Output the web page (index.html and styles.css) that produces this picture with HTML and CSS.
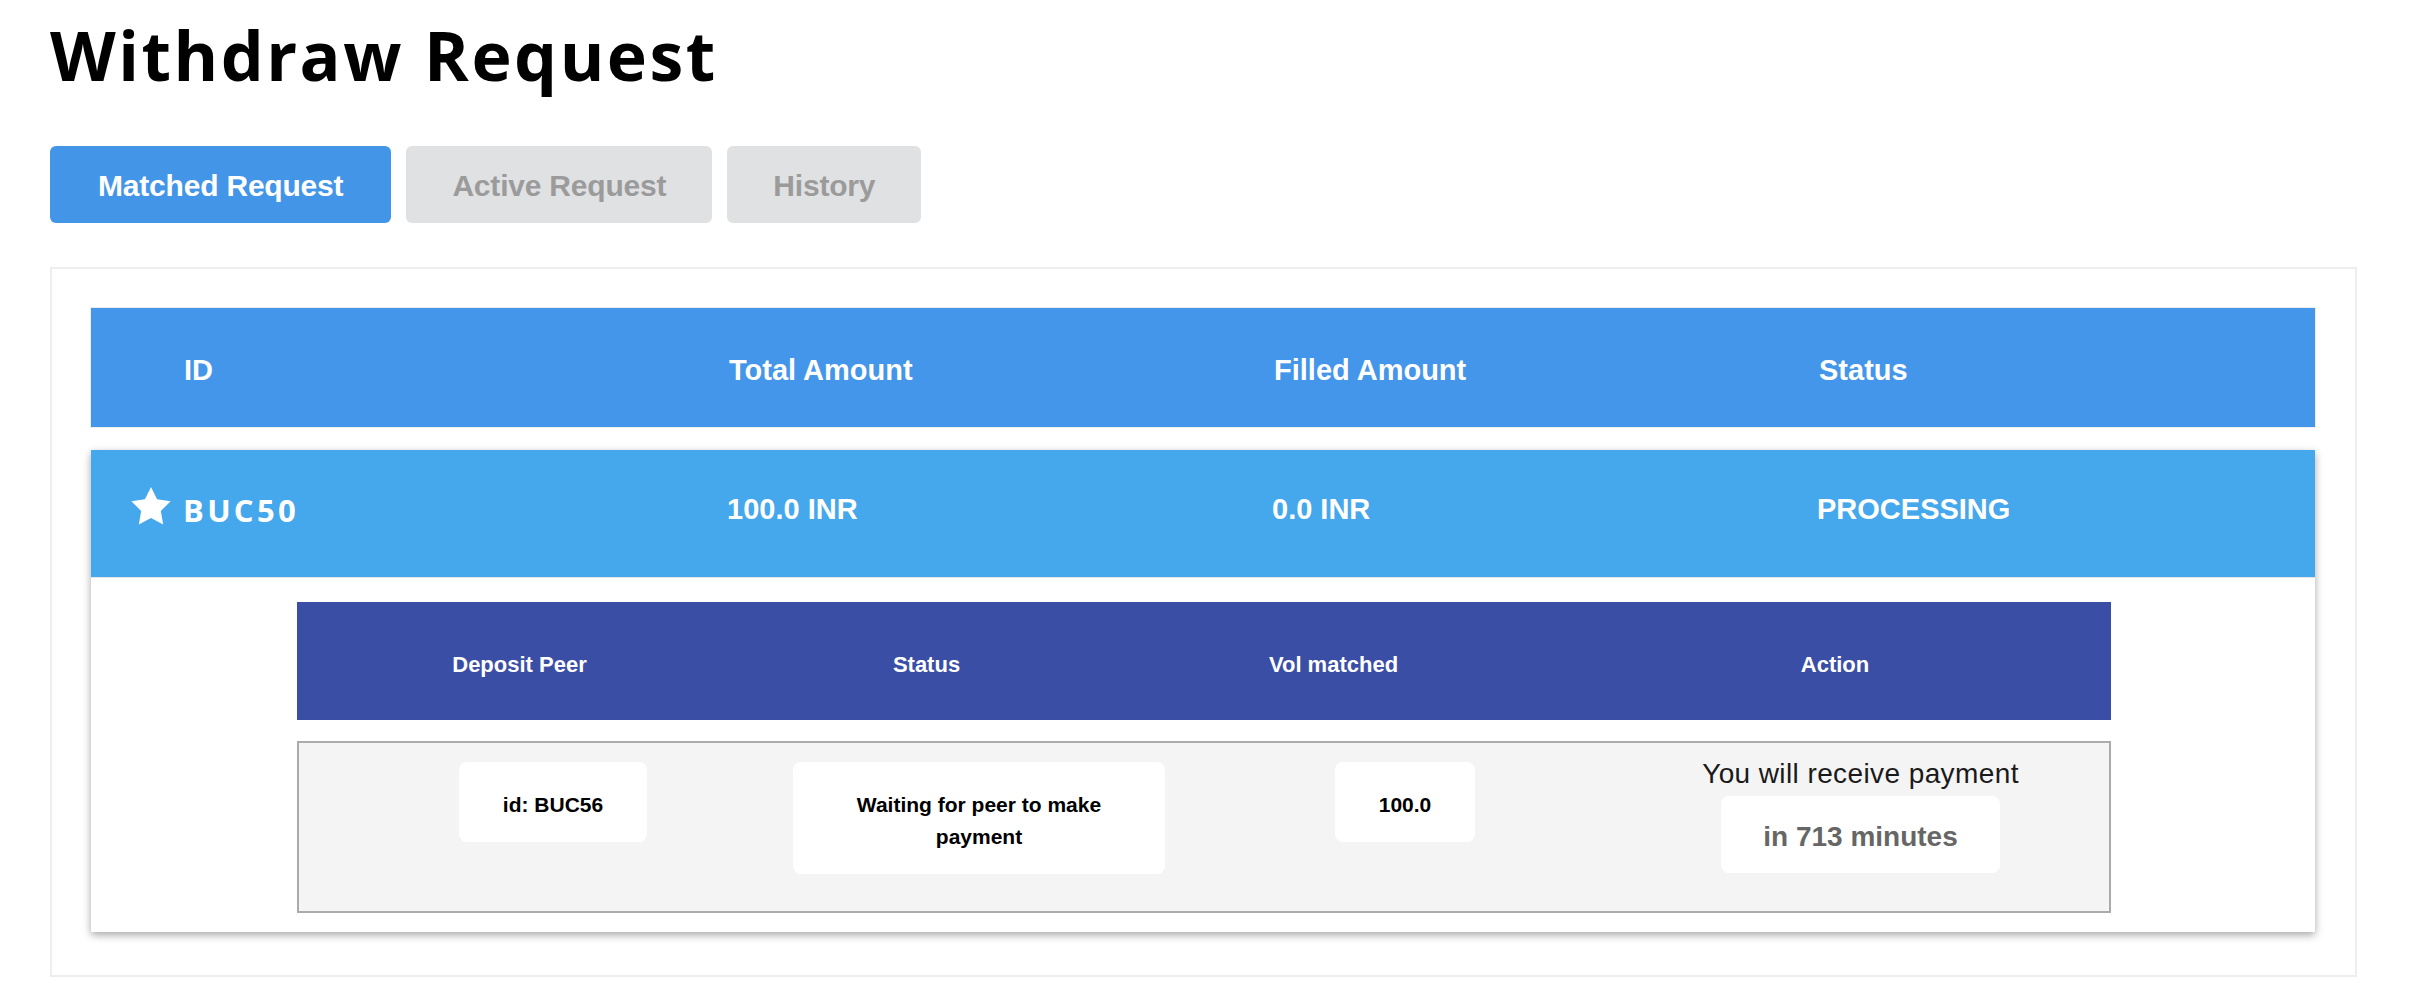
FILE: index.html
```html
<!DOCTYPE html>
<html lang="en">
<head>
<meta charset="utf-8">
<title>Withdraw Request</title>
<link rel="stylesheet" href="styles.css">
</head>
<body>
<div class="page">
  <h1 class="title">Withdraw Request</h1>
  <div class="tabs">
    <button class="tab tab-active">Matched Request</button>
    <button class="tab">Active Request</button>
    <button class="tab">History</button>
  </div>
  <div class="card">
    <div class="thead">
      <div class="th">ID</div>
      <div class="th">Total Amount</div>
      <div class="th">Filled Amount</div>
      <div class="th">Status</div>
    </div>
    <div class="panel">
      <div class="mainrow">
        <div class="idcell">
          <svg class="star" viewBox="2 2 20 19.3" width="40" height="38" aria-hidden="true"><polygon fill="#fff" points="12,2 15.09,8.26 22,9.27 17,14.14 18.18,21.02 12,17.77 5.82,21.02 7,14.14 2,9.27 8.91,8.26"/></svg>
          <span class="idtext">BUC50</span>
        </div>
        <div class="td">100.0 INR</div>
        <div class="td">0.0 INR</div>
        <div class="td">PROCESSING</div>
      </div>
      <div class="subtable">
        <div class="subhead">
          <div class="sh">Deposit Peer</div>
          <div class="sh">Status</div>
          <div class="sh">Vol matched</div>
          <div class="sh sh-action">Action</div>
        </div>
        <div class="subbody">
          <div class="cell"><div class="box">id: BUC56</div></div>
          <div class="cell"><div class="box box-wide">Waiting for peer to make payment</div></div>
          <div class="cell"><div class="box">100.0</div></div>
          <div class="cell cell-action">
            <div class="action-text">You will receive payment</div>
            <div class="box box-time">in 713 minutes</div>
          </div>
        </div>
      </div>
    </div>
  </div>
</div>
</body>
</html>
```
FILE: styles.css
```css
* { box-sizing: border-box; }
html, body { margin: 0; padding: 0; background: #fff; }
body { font-family: "Liberation Sans", Arial, sans-serif; color: #000; }

.page { padding: 0 57px 0 50px; }

.title {
  margin: 0;
  padding-top: 14px;
  font-family: "Open Sans", "Liberation Sans", sans-serif;
  font-weight: 700;
  font-size: 68px;
  line-height: 82px;
  letter-spacing: 2.5px;
  color: #000;
}

.tabs { display: flex; gap: 15px; margin-top: 50px; }
.tab {
  height: 77px;
  padding: 2px 46px 0;
  border: 0;
  border-radius: 6px;
  background: #e0e1e3;
  color: #9b9b9b;
  font-family: "Liberation Sans", Arial, sans-serif;
  font-weight: 700;
  font-size: 30px;
  letter-spacing: -0.2px;
}
.tab-active { background: #4395e8; color: #fff; padding: 2px 48px 0; }

.card {
  margin-top: 44px;
  border: 2px solid #eeeeee;
  padding: 39px 40px 43px 39px;
}

.thead {
  display: grid;
  grid-template-columns: 545px 545px 545px 1fr;
  align-items: center;
  height: 119px;
  padding: 6px 0 0 93px;
  background: #4396e9;
  box-shadow: 0 0 0 1px #ececec;
  color: #fff;
  font-weight: 700;
  font-size: 29px;
}

.panel {
  margin-top: 23px;
  background: #fff;
  box-shadow: 0 3px 8px rgba(0,0,0,0.35);
  padding-bottom: 19px;
}

.mainrow {
  display: grid;
  grid-template-columns: 596px 545px 545px 1fr;
  align-items: center;
  height: 128px;
  padding: 0 0 8px 40px;
  background: #45a8ec;
  border-bottom: 1px solid #e6e6e6;
  color: #fff;
  font-weight: 700;
  font-size: 29px;
}
.idcell { display: flex; align-items: center; gap: 12px; }
.star { display: block; margin-top: -8px; }
.idtext {
  font-family: "Open Sans", "Liberation Sans", sans-serif;
  font-weight: 700;
  font-size: 31px;
  letter-spacing: 3.3px;
}

.subtable { margin: 24px 204px 0 206px; }
.subhead {
  display: grid;
  grid-template-columns: 407px 407px 407px 1fr;
  align-items: center;
  height: 118px;
  padding: 8px 0 0 19px;
  background: #3a4ea6;
  color: #fff;
  font-weight: 700;
  font-size: 22px;
  text-align: center;
}
.sh-action { padding-left: 22px; }

.subbody {
  display: grid;
  grid-template-columns: 426px 426px 426px 1fr;
  align-items: start;
  margin-top: 21px;
  height: 172px;
  padding: 19px 0 0 41px;
  background: #f4f4f4;
  border: 2px solid #ababab;
}
.cell { display: flex; flex-direction: column; align-items: center; }
.box {
  background: #fff;
  border-radius: 8px;
  padding: 27px 44px 21px;
  font-weight: 700;
  font-size: 21px;
  line-height: 32px;
  text-align: center;
  color: #000;
}
.box-wide { width: 372px; }
.cell-action { margin-top: -5px; padding-right: 6px; }
.action-text {
  font-size: 28px;
  line-height: 33px;
  color: #1a1a1a;
  letter-spacing: 0.4px;
}
.box-time {
  margin-top: 6px;
  padding: 25px 42px 20px;
  font-size: 28px;
  color: #666;
}
```
